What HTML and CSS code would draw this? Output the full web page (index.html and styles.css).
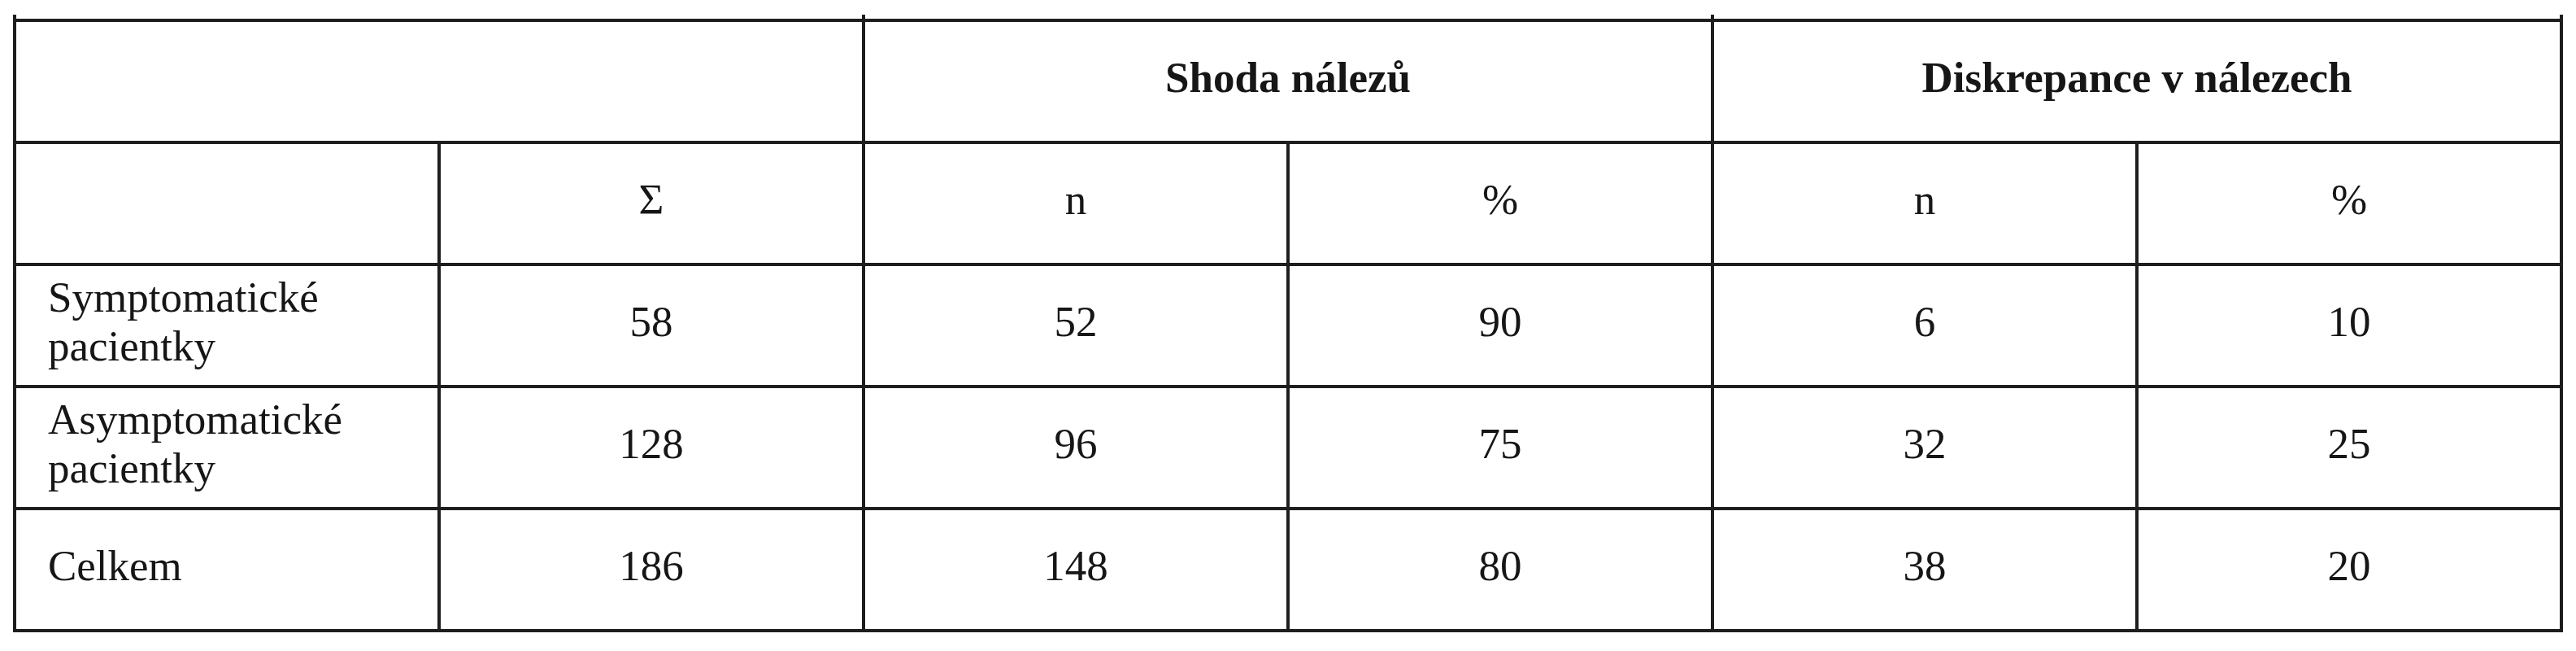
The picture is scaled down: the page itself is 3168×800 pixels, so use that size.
FILE: index.html
```html
<!DOCTYPE html>
<html lang="cs">
<head>
<meta charset="utf-8">
<title>Tabulka</title>
<link rel="stylesheet" href="styles.css">
</head>
<body>
<table class="data">
  <colgroup>
    <col><col><col><col><col><col>
  </colgroup>
  <tr class="head">
    <td colspan="2"></td>
    <th colspan="2">Shoda nálezů</th>
    <th colspan="2">Diskrepance v nálezech</th>
  </tr>
  <tr class="sub">
    <td></td>
    <td class="num">Σ</td>
    <td class="num">n</td>
    <td class="num">%</td>
    <td class="num">n</td>
    <td class="num">%</td>
  </tr>
  <tr>
    <td class="label">Symptomatické<br>pacientky</td>
    <td class="num">58</td>
    <td class="num">52</td>
    <td class="num">90</td>
    <td class="num">6</td>
    <td class="num">10</td>
  </tr>
  <tr>
    <td class="label">Asymptomatické<br>pacientky</td>
    <td class="num">128</td>
    <td class="num">96</td>
    <td class="num">75</td>
    <td class="num">32</td>
    <td class="num">25</td>
  </tr>
  <tr class="last">
    <td class="label">Celkem</td>
    <td class="num">186</td>
    <td class="num">148</td>
    <td class="num">80</td>
    <td class="num">38</td>
    <td class="num">20</td>
  </tr>
</table>
</body>
</html>
```

FILE: styles.css
```css
html, body {
  margin: 0;
  padding: 0;
  background: #ffffff;
}

body {
  font-family: "Liberation Serif", "Times New Roman", serif;
  color: #161616;
}

.data {
  margin: 23px 0 0 16px;
  width: 3136px;
  table-layout: fixed;
  border-collapse: collapse;
  font-size: 53px;
  line-height: 60px;
}

.data td,
.data th {
  position: relative;
  border: 4px solid #1e1e1e;
  height: 136px;
  padding: 0 0 10px 0;
  vertical-align: middle;
}

.data th {
  font-weight: bold;
  text-align: center;
}

.data .num {
  text-align: center;
}

.data .label {
  text-align: left;
  padding-left: 39px;
}

/* small print ticks where vertical rules run past the outer frame */
.data .head > *::before,
.data .last > *::before {
  content: "";
  position: absolute;
  left: -4px;
  width: 4px;
  height: 6px;
  background: #1e1e1e;
}

.data .head > *:last-child::after,
.data .last > *:last-child::after {
  content: "";
  position: absolute;
  right: -4px;
  width: 4px;
  height: 6px;
  background: #1e1e1e;
}

.data .head > *::before,
.data .head > *:last-child::after {
  top: -9px;
}

.data .last > *::before,
.data .last > *:last-child::after {
  bottom: -9px;
}
```
